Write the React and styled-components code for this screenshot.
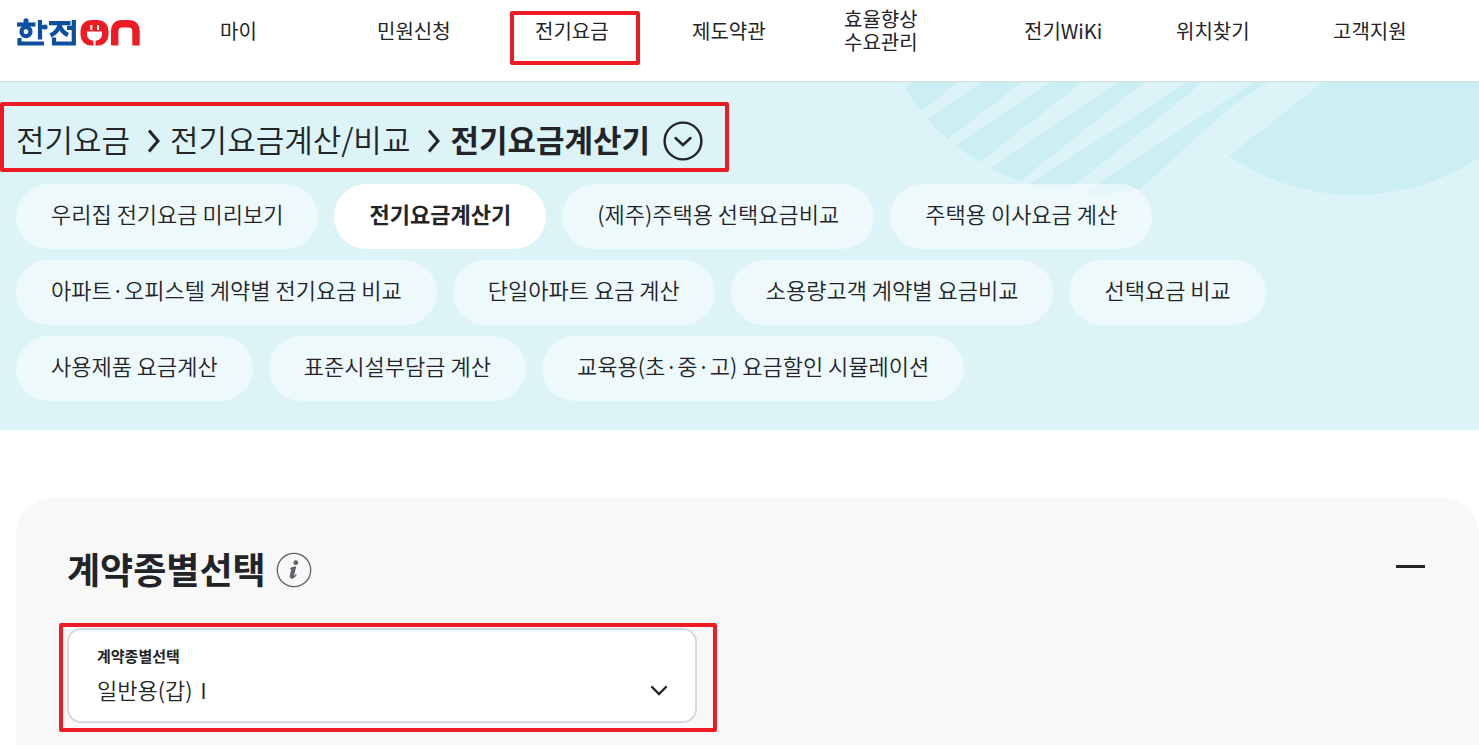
import styled, { createGlobalStyle } from 'styled-components';

const menus = [
  { label: '마이' },
  { label: '민원신청' },
  { label: '전기요금', marked: true },
  { label: '제도약관' },
  { label: '효율향상 수요관리' },
  { label: '전기WiKi' },
  { label: '위치찾기' },
  { label: '고객지원' },
];

const tabRows = [
  ['우리집 전기요금 미리보기', '전기요금계산기', '(제주)주택용 선택요금비교', '주택용 이사요금 계산'],
  ['아파트·오피스텔 계약별 전기요금 비교', '단일아파트 요금 계산', '소용량고객 계약별 요금비교', '선택요금 비교'],
  ['사용제품 요금계산', '표준시설부담금 계산', '교육용(초·중·고) 요금할인 시뮬레이션'],
];

const contracts = ['일반용(갑)Ⅰ', '일반용(갑)Ⅱ', '일반용(을)', '주택용', '산업용(갑)Ⅰ', '교육용(갑)'];

const App = () => {
  return (
    <Page>
      <GlobalStyle />
      <Header>
        <LogoLink href="/" aria-label="한전ON">
          <Logo />
        </LogoLink>
        <Nav>
          {menus.map(({ label, marked }) => (
            <NavItem key={label}>
              <NavLink href="/">{label}</NavLink>
              {marked && <NavMark />}
            </NavItem>
          ))}
        </Nav>
      </Header>

      <Hero>
        <HeroArt width="574" height="120" viewBox="0 0 574 120" aria-hidden="true">
          <path d="M8 0H54L17 29Q7 18 0 6Z" />
          <path d="M77 0H117L43 57Q32 48 23 37Z" />
          <path d="M145 0H177L75 80Q62 73 51 63Z" />
          <path d="M214 0H240L115 99Q100 94 86 86Z" />
          <path d="M282 0H298L162 109Q143 107 125 102Z" />
          <path d="M349 0H363L322 28L235 107Q206 114 177 112Z" />
          <path d="M418 0H574V76A225 225 0 0 1 324 74Z" />
        </HeroArt>
        <Breadcrumb>
          <CrumbLink href="/">전기요금</CrumbLink>
          <CrumbArrow />
          <CrumbLink href="/">전기요금계산/비교</CrumbLink>
          <CrumbArrow />
          <CrumbCurrent>전기요금계산기</CrumbCurrent>
          <CrumbToggle />
        </Breadcrumb>
        <Tabs>
          {tabRows.map((row) => (
            <TabRow key={row[0]}>
              {row.map((tab) => (
                <Tab key={tab} href="/" $active={tab === '전기요금계산기'}>
                  {tab}
                </Tab>
              ))}
            </TabRow>
          ))}
        </Tabs>
      </Hero>

      <Card>
        <CardHeader>
          <CardTitle>계약종별선택</CardTitle>
          <InfoButton />
          <FoldButton type="button" aria-label="접기" />
        </CardHeader>
        <Field>
          <FieldLabel htmlFor="contract">계약종별선택</FieldLabel>
          <FieldSelect id="contract">
            {contracts.map((contract) => (
              <option key={contract}>{contract}</option>
            ))}
          </FieldSelect>
          <FieldArrow width="18" height="12" viewBox="0 0 18 12" aria-hidden="true">
            <path d="M2 2l7 7 7-7" fill="none" stroke="#222428" strokeWidth="2.4" strokeLinecap="round" />
          </FieldArrow>
          <FieldMark />
        </Field>
      </Card>
    </Page>
  );
};

const Logo = () => (
  <svg width="124" height="30" viewBox="0 0 124 30" fill="none" aria-hidden="true">
    <g stroke="#0b4ea2" strokeWidth="4.2">
      <path d="M1 6.500h18.500" />
      <circle cx="10" cy="13.700" r="4.500" />
      <path d="M24 2v19.500M24 9h4.500M3.500 20v5.500h24.500" />
      <path d="M33 5.200h21.500M43.500 6c-.5 5-4 9-9 11.500M43.500 6.500c1 5 4 8.500 8.500 10.500M51 9.800h6M57.800 2v25.500M38 19.500v6h20" />
    </g>
    <circle cx="10" cy="2.800" r="2.600" fill="#0b4ea2" />
    <circle cx="29" cy="9" r="2.600" fill="#0b4ea2" />
    <rect x="64.500" y="2" width="28" height="25.500" rx="10.500" fill="#ed1c24" />
    <path stroke="#fff" strokeWidth="2" d="M75.300 7v5M82 7v5" />
    <path fill="#fff" d="M71 13.500h15v2.500c0 4.300-2.700 6.500-6.400 6.500v5h-2.200v-5c-3.700 0-6.400-2.200-6.400-6.500Z" />
    <path stroke="#ed1c24" strokeWidth="7.400" d="M98.700 27.500V14c0-5.500 2.300-8.300 7.500-8.300h6.200c5.200 0 7.600 2.800 7.600 8.300v13.500" />
  </svg>
);

const CrumbArrow = () => (
  <Arrow width="14" height="24" viewBox="0 0 14 24" aria-hidden="true">
    <path d="M2 1.500l9 10.500-9 10.500" fill="none" stroke="#222428" strokeWidth="3" />
  </Arrow>
);

const CrumbToggle = () => (
  <RoundButton type="button" aria-label="메뉴 펼치기">
    <svg width="40" height="40" viewBox="0 0 40 40" fill="none" stroke="#222428" strokeWidth="2.4">
      <circle cx="20" cy="20" r="18.400" />
      <path d="M12.500 17l7.500 7 7.500-7" strokeLinecap="round" />
    </svg>
  </RoundButton>
);

const InfoButton = () => (
  <RoundButton type="button" aria-label="도움말">
    <svg width="36" height="36" viewBox="0 0 36 36" fill="none" stroke="#5f636b">
      <circle cx="18" cy="18" r="16.700" strokeWidth="1.300" />
      <circle cx="19.800" cy="10.700" r="2.400" fill="#5f636b" stroke="none" />
      <path
        d="M14.300 16.500c1.700-1 3.500-1.600 5.400-1.700l-2.500 9.500c1.200-.1 2.200-.9 2.900-1.900-.9 3.600-6 5.700-5.900 1.800.1-1.500 1-4.300 1.600-6.800Z"
        fill="#5f636b"
      />
    </svg>
  </RoundButton>
);

const GlobalStyle = createGlobalStyle`
  * {
    box-sizing: border-box;
  }

  body {
    margin: 0;
    background: #fff;
    color: #222428;
    font-family: 'Noto Sans CJK KR', sans-serif;
    word-break: keep-all;
  }

  a {
    color: inherit;
    text-decoration: none;
  }
`;

const Page = styled.div`
  display: flex;
  flex-direction: column;
  min-height: 100vh;
`;

const Header = styled.header`
  display: flex;
  min-height: 82px;
  border-bottom: 1px solid #d5dde2;
`;

const LogoLink = styled.a`
  width: 220px;
  padding: 18px 16px;
`;

const Nav = styled.ul`
  flex: 1;
  display: grid;
  grid-template-columns: 157fr 158fr 157fr 152fr 180fr 152fr 157fr 146fr;
  margin: 0;
  padding: 0;
  list-style: none;
`;

const NavItem = styled.li`
  position: relative;
  display: flex;
  align-items: center;
  height: 60px;
`;

const NavLink = styled.a`
  max-width: 84px;
  font-size: 20px;
  line-height: 23px;
`;

const Mark = styled.span`
  position: absolute;
  border: 4px solid #ed1c24;
  border-radius: 2px;
  pointer-events: none;
`;

const NavMark = styled(Mark)`
  top: 11px;
  left: -25px;
  width: 130px;
  height: 54px;
`;

const Hero = styled.section`
  position: relative;
  padding: 20px 0 29px;
  background: #dcf3f8;
`;

const HeroArt = styled.svg`
  position: absolute;
  top: 0;
  right: 0;
  fill: #cbeff3;
`;

const Breadcrumb = styled.div`
  position: relative;
  display: inline-flex;
  align-items: center;
  height: 70px;
  padding: 7px 22px 0 12px;
  border: 4px solid #ed1c24;
  border-radius: 2px;
  font-size: 31px;
  line-height: 40px;
`;

const CrumbLink = styled.a`
  font-weight: 350;
  padding-bottom: 4px;
`;

const CrumbCurrent = styled.strong`
  font-weight: 700;
  padding-bottom: 4px;
  margin-right: 13px;
`;

const Arrow = styled.svg`
  margin: 0 9px 0 17px;
`;

const RoundButton = styled.button`
  display: flex;
  border: 0;
  background: none;
  padding: 0;
  cursor: pointer;
`;

const Tabs = styled.nav`
  position: relative;
  display: flex;
  flex-direction: column;
  gap: 11px;
  padding: 12px 16px 0;
`;

const TabRow = styled.div`
  display: flex;
  flex-wrap: wrap;
  gap: 11px 16px;
`;

const Tab = styled.a`
  padding: 0 35px 7px;
  font-size: 22px;
  line-height: 58px;
  border-radius: 33px;
  background: ${({ $active }) => ($active ? '#fff' : 'rgba(255, 255, 255, 0.5)')};
  font-weight: ${({ $active }) => ($active ? 700 : 350)};
`;

const Card = styled.section`
  flex: 1;
  margin: 68px 0 0 16px;
  padding: 46px 51px 16px;
  border-radius: 36px 36px 0 0;
  background: #f8f8f8;
`;

const CardHeader = styled.div`
  display: flex;
  align-items: center;
  gap: 10px;
  margin-bottom: 32px;
`;

const CardTitle = styled.h2`
  margin: 0;
  padding-bottom: 4px;
  font-size: 36px;
  font-weight: 700;
  line-height: 48px;
`;

const FoldButton = styled.button`
  width: 29px;
  height: 36px;
  margin: 0 3px 0 auto;
  padding: 0;
  border: 0;
  background: linear-gradient(#222428, #222428) center 13px / 29px 3px no-repeat;
  cursor: pointer;
`;

const Field = styled.div`
  position: relative;
  max-width: 630px;
`;

const FieldLabel = styled.label`
  position: absolute;
  top: 18px;
  left: 30px;
  font-size: 15px;
  font-weight: 700;
  line-height: 20px;
`;

const FieldSelect = styled.select`
  display: block;
  width: 100%;
  height: 95px;
  padding: 26px 28px 0;
  appearance: none;
  border: 2px solid #d5d9e2;
  border-radius: 14px;
  background: #fff;
  color: inherit;
  font-family: inherit;
  font-size: 22px;
  font-weight: 350;
`;

const FieldArrow = styled.svg`
  position: absolute;
  top: 57px;
  right: 29px;
  pointer-events: none;
`;

const FieldMark = styled(Mark)`
  inset: -5px -20px -9px -8px;
`;

export default App;
